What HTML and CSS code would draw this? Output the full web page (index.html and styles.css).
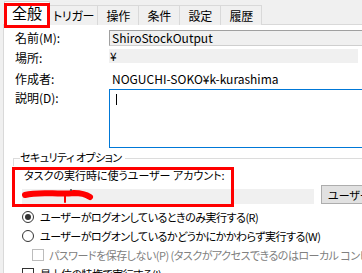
FILE: index.html
```html
<!DOCTYPE html>
<html>
<head>
	<title>タスクのプロパティ</title>
	<meta charset="utf-8">
	<link rel="stylesheet" href="styles.css">
</head>
<body>
	<div class="page">
		<div class="tabs">
			<div class="tab active">全般</div>
			<div class="tab">トリガー</div>
			<div class="tab">操作</div>
			<div class="tab">条件</div>
			<div class="tab">設定</div>
			<div class="tab">履歴</div>
		</div>
		<div class="panel">
			<div class="row row-name">
				<label class="label">名前(M):</label>
				<div class="field">ShiroStockOutput</div>
			</div>
			<div class="row row-location">
				<label class="label">場所:</label>
				<div class="band">¥</div>
			</div>
			<div class="row row-author">
				<label class="label">作成者:</label>
				<div class="value">NOGUCHI-SOKO¥k-kurashima</div>
			</div>
			<div class="row row-desc">
				<label class="label">説明(D):</label>
				<div class="desc"><span class="caret"></span></div>
			</div>

			<div class="group">
				<div class="group-title">
					<span class="line-start"></span>
					<span class="group-text">セキュリティ オプション</span>
					<span class="line-end"></span>
				</div>
				<div class="account-label">タスクの実行時に使うユーザー アカウント:</div>
				<div class="account-row">
					<div class="account">
						<svg class="scribble" width="80" height="20" viewBox="0 0 80 20">
							<path d="M3 6 C 18 2, 36 6, 52 4 C 60 4, 65 6, 68 8" stroke="#f00" stroke-width="6" stroke-linecap="round" fill="none"/>
							<path d="M43 7 L 43 13" stroke="#f00" stroke-width="2" stroke-linecap="round" fill="none"/>
							<circle cx="49" cy="1" r="1" fill="#444"/>
						</svg>
					</div>
					<button class="btn">ユーザーまたはグループの変更(U)...</button>
				</div>
				<div class="option">
					<span class="radio checked"></span>
					<span>ユーザーがログオンしているときのみ実行する(R)</span>
				</div>
				<div class="option">
					<span class="radio"></span>
					<span>ユーザーがログオンしているかどうかにかかわらず実行する(W)</span>
				</div>
				<div class="option sub disabled">
					<span class="check"></span>
					<span>パスワードを保存しない(P) (タスクがアクセスできるのはローカル コンピューター リソースのみ)</span>
				</div>
				<div class="option">
					<span class="check dark"></span>
					<span>最上位の特権で実行する(I)</span>
				</div>
			</div>
		</div>
	</div>
	<div class="mark mark-tab"></div>
	<div class="mark mark-account"></div>
</body>
</html>
```

FILE: styles.css
```css
html, body {
	margin: 0;
	width: 362px;
	height: 273px;
	overflow: hidden;
}

body {
	position: relative;
	background-color: #F0F0F0;
	font-family: "Noto Sans CJK JP", "Noto Sans", sans-serif;
	font-size: 12px;
	font-feature-settings: "palt";
	color: #000;
}

.page {
	width: 460px;
}

.tabs {
	display: flex;
	align-items: flex-end;
	height: 25px;
	padding-left: 4px;
	box-sizing: border-box;
}

.tab {
	height: 20px;
	min-width: 42px;
	line-height: 19px;
	padding: 0 3px;
	border: 1px solid #D9D9D9;
	border-bottom: none;
	margin-left: -1px;
	background-color: #F0F0F0;
	box-sizing: border-box;
	text-align: center;
	white-space: nowrap;
	letter-spacing: -0.3px;
}

.tab.active {
	height: 24px;
	min-width: 46px;
	line-height: 22px;
	padding: 0 6px;
	margin-left: 0;
	font-size: 15px;
	letter-spacing: 0;
	background-color: #FFF;
	position: relative;
	z-index: 1;
}

.panel {
	margin-left: 3px;
	margin-top: -1px;
	border-left: 1px solid #D9D9D9;
	border-top: 1px solid #D9D9D9;
	background-color: #FFF;
	padding-left: 11px;
	height: 260px;
	box-sizing: border-box;
}

.row {
	display: flex;
}

.label {
	width: 94px;
	flex: none;
	line-height: 16px;
}

.row-name {
	margin-top: 5px;
	height: 16px;
}

.field {
	flex: 1;
	height: 16px;
	line-height: 14px;
	padding-left: 2px;
	border: 1px solid #A0A0A0;
	border-bottom-color: #CFCFCF;
	background-color: #F0F0F0;
	box-sizing: border-box;
}

.row-location {
	margin-top: 3px;
	height: 14px;
}

.row-location .label {
	line-height: 18px;
}

.band {
	width: 248px;
	height: 14px;
	line-height: 14px;
	padding-left: 1px;
	background-color: #F0F0F0;
}

.row-author {
	height: 18px;
	margin-top: 8px;
}

.row-author .label,
.value {
	line-height: 16px;
}

.value {
	padding-left: 3px;
}

.row-desc {
	height: 59px;
}

.row-desc .label {
	padding-top: 1px;
}

.desc {
	flex: 1;
	border: 1px solid #0078D7;
	background-color: #FFF;
	box-sizing: border-box;
	padding: 4px 0 0 6px;
}

.caret {
	display: block;
	width: 1px;
	height: 11px;
	background-color: #000;
}

.group {
	margin-left: -2px;
	margin-top: 1px;
	font-size: 11px;
}

.group-title {
	display: flex;
	align-items: center;
	height: 17px;
}

.line-start {
	width: 7px;
	align-self: stretch;
	border-top: 1px solid #DCDCDC;
	border-left: 1px solid #DCDCDC;
	margin-top: 9px;
	box-sizing: border-box;
}

.group-text {
	line-height: 17px;
	padding: 0 3px 0 0;
	letter-spacing: -0.5px;
}

.line-end {
	flex: 1;
	height: 1px;
	margin-top: 1px;
	background-color: #DCDCDC;
}

.account-label {
	padding-left: 11px;
	height: 19px;
	line-height: 19px;
}

.account-row {
	display: flex;
	align-items: flex-end;
	height: 19px;
	padding-left: 9px;
}

.account {
	position: relative;
	flex: none;
	width: 292px;
	height: 15px;
	background-color: #F0F0F0;
}

.scribble {
	position: absolute;
	left: 0;
	top: 0;
}

.btn {
	margin-left: 7px;
	height: 19px;
	padding: 0 6px;
	border: 1px solid #ADADAD;
	background-color: #E1E1E1;
	font-family: inherit;
	font-size: 11px;
	font-feature-settings: "palt";
	line-height: 16px;
	white-space: nowrap;
	color: #000;
}

.option {
	display: flex;
	align-items: center;
	height: 19px;
	padding-left: 9px;
	white-space: nowrap;
	letter-spacing: -0.5px;
}

.account-row + .option {
	margin-top: 3px;
}

.radio {
	width: 12px;
	height: 12px;
	border: 1px solid #333;
	border-radius: 50%;
	box-sizing: border-box;
	margin-right: 6px;
	position: relative;
	flex: none;
}

.radio.checked::after {
	content: "";
	position: absolute;
	left: 2px;
	top: 2px;
	width: 6px;
	height: 6px;
	border-radius: 50%;
	background-color: #333;
}

.check {
	width: 12px;
	height: 12px;
	border: 1px solid #BCBCBC;
	box-sizing: border-box;
	margin-right: 5px;
	flex: none;
	background-color: #FFF;
}

.check.dark {
	border-color: #333;
	margin-right: 6px;
}

.sub {
	padding-left: 19px;
}

.disabled {
	color: #808080;
}

.mark {
	position: absolute;
	border: 3px solid #F00;
	box-sizing: border-box;
	z-index: 2;
}

.mark-tab {
	left: 4px;
	top: 3px;
	width: 46px;
	height: 25px;
}

.mark-account {
	left: 12px;
	top: 167px;
	width: 222px;
	height: 40px;
}
```
